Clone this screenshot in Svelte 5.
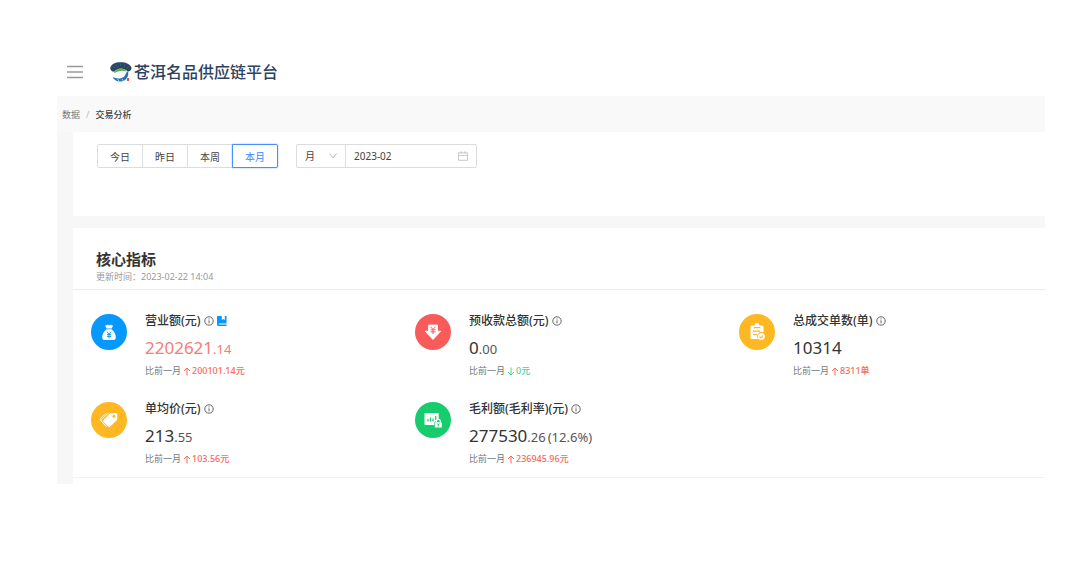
<script lang="ts">
  type Metric = {
    name: string;
    icon: string;
    color: string;
    value: string;
    decimals?: string;
    extra?: string;
    diff: string;
    down?: boolean;
    highlight?: boolean;
    report?: boolean;
  };

  const ranges = ['今日', '昨日', '本周', '本月'];
  let activeRange = $state('本月');
  let unit = $state('月');
  let month = $state('2023-02');

  const metrics: Metric[] = [
    { name: '营业额(元)', icon: 'bag', color: '#0598ff', value: '2202621', decimals: '.14', diff: '200101.14元', highlight: true, report: true },
    { name: '预收款总额(元)', icon: 'arrow', color: '#f95a5a', value: '0', decimals: '.00', diff: '0元', down: true },
    { name: '总成交单数(单)', icon: 'order', color: '#ffb822', value: '10314', diff: '8311单' },
    { name: '单均价(元)', icon: 'tag', color: '#ffb822', value: '213', decimals: '.55', diff: '103.56元' },
    { name: '毛利额(毛利率)(元)', icon: 'profit', color: '#16cc6c', value: '277530', decimals: '.26', extra: '(12.6%)', diff: '236945.96元' },
  ];
</script>

<div class="page">
  <header>
    <button class="menu" aria-label="菜单">
      <svg width="18" height="14" viewBox="0 0 18 14" stroke="#999" stroke-width="1.3">
        <path d="M1 1.5h16M1 7h16M1 12.5h16" />
      </svg>
    </button>
    <svg class="logo" width="22" height="20" viewBox="0 0 22 20">
      <path d="M0.2 6C1.2 2.2 5 0.2 10.6 0.2S20.2 2.2 21.6 5.8C21.2 8.600 19.700 9.600 17.600 9.400C15.800 7.200 13 6.500 10.300 6.800C7.400 7.100 5.600 8.100 4.300 9.800C1.800 9.800 0.500 8.600 0.200 6Z" fill="#294668" />
      <path d="M3 4.2l1.500 1.800M6 2.400l1 2.400M10.500 1.600v2.400M15 2.400l-1 2.400M18.600 4.400l-1.600 1.600" stroke="#60788f" stroke-width=".4" />
      <path d="M3.800 11.600C5 8 9 5.700 12.500 6.400C14.600 6.800 16 8 16.600 9.800C12.800 8 8.400 8.600 3.800 11.600Z" fill="#65af42" />
      <path d="M18 9.200C19.400 13.800 16 19.200 10.600 19.600C6.600 19.800 4 18 2.600 14.800C6.800 17.600 14.700 17.400 16 11Z" fill="#2774b5" />
      <path d="M7.500 16.800l1.400 2.400M12 16.800l1.200 2" stroke="#fff" stroke-width=".6" />
      <rect x="17" y="16" width="2" height="3" fill="#ee4c4c" />
    </svg>
    <h1>苍洱名品供应链平台</h1>
  </header>

  <main>
    <nav aria-label="breadcrumb">
      <a href="#data">数据</a>
      <span class="slash">/</span>
      <span class="current">交易分析</span>
    </nav>

    <section class="filters">
      <div class="ranges">
        {#each ranges as range}
          <button class:active={activeRange === range} onclick={() => (activeRange = range)}>{range}</button>
        {/each}
      </div>
      <div class="picker">
        <div class="unit">
          <select aria-label="周期" bind:value={unit}>
            <option>日</option>
            <option>周</option>
            <option>月</option>
          </select>
          <svg width="8" height="6" viewBox="0 0 8 6" fill="none" stroke="#bbb">
            <path d="M.5.5L4 5 7.5.5" />
          </svg>
        </div>
        <div class="date">
          <input type="text" aria-label="日期" bind:value={month} />
          <svg width="10" height="10" viewBox="0 0 10 10" fill="none" stroke="#c4c4c4" stroke-width=".9">
            <path d="M.5 1.8h9v7.5h-9zM.5 4.4h9M3 .2v2.6M7 .2v2.6" />
          </svg>
        </div>
      </div>
    </section>

    <section class="panel">
      <div class="panel-head">
        <h2>核心指标</h2>
        <p>更新时间：2023-02-22 14:04</p>
      </div>

      <div class="metrics">
        {#each metrics as metric}
          <article>
            <svg class="badge" width="36" height="36" viewBox="0 0 36 36">
              <circle cx="18" cy="18" r="18" fill={metric.color} />
              {#if metric.icon === 'bag'}
                <path d="M14 11.5c1.2 0 1.5-.8 2.5-.8.8 0 1 .6 1.7.6s1-.6 1.8-.6c.9 0 1.1.8 2.2.8l-1.5 3h-5.2z" fill="#fff" />
                <path d="M15.4 15.2h5.2c2.6 2 4.2 5 4.2 8 0 2-1 2.9-3 2.9h-7.6c-2 0-3-.9-3-2.9 0-3 1.6-6 4.2-8z" fill="#fff" />
                <path d="M16 17.8l2 2.5 2-2.5M18 20.3v4M16 20.6h4M16 22.4h4" stroke={metric.color} fill="none" />
              {:else if metric.icon === 'arrow'}
                <path d="M13.5 11h9v6.2h3.3L18 25.6l-7.8-8.4h3.3z" fill="#fff" stroke="#fff" stroke-linejoin="round" stroke-width=".8" />
                <path d="M15.7 13l2.3 2.4 2.3-2.4M18 15.4V20M15.5 15.8h5M15.5 17.8h5" stroke={metric.color} fill="none" />
              {:else if metric.icon === 'order'}
                <path d="M13 11.5h2.6c.2-1.6 1.1-2.4 2.4-2.4s2.2.8 2.4 2.4H23c1 0 1.5.5 1.5 1.5v5.4a4.3 4.3 0 0 0-5.3 6.6H13c-1 0-1.5-.5-1.5-1.5V13c0-1 .5-1.5 1.5-1.5z" fill="#fff" />
                <path d="M14.8 13.7h6.4M14 17.2h7M14 20.5h4" stroke={metric.color} stroke-width="1.2" />
                <circle cx="22.3" cy="22.6" r="3.5" fill="#fff" />
                <path d="M20.5 22.5l1.4 1.5 2.4-2.7" fill="none" stroke={metric.color} stroke-width="1.1" />
              {:else if metric.icon === 'tag'}
                <path d="M19 11.2l5.5-.2c1.100 0 1.700.6 1.700 1.700v5.100l-6.800 6.700c-.8.800-1.600.8-2.400 0l-4.200-4.300c-.8-.8-.8-1.600 0-2.400z" fill="#fff" />
                <path d="M17.2 11.2l-6.4 6c-.8.8-.8 1.5 0 2.3l4.8 5.3M15.2 11.2l-5.4 5c-.8.8-.8 1.5 0 2.3l4 4.6" fill="none" stroke="#fff" stroke-width=".8" />
                <circle cx="23" cy="14.3" r="1.5" fill={metric.color} />
              {:else}
                <path d="M10.5 11h13.2v7.1a4 4 0 0 0-4.5 4.9h-8.7c-.7 0-1-.3-1-1V12c0-.7.3-1 1-1z" fill="#fff" />
                <path d="M13 17v2.5M15.500 15.500v4M18 16.500v3M20.700 14v4" stroke={metric.color} stroke-width="1.2" />
                <path d="M21.3 20.500v-1.100a2 2 0 0 1 4 0v1.100" fill="none" stroke="#fff" stroke-width="1.2" />
                <rect x="19.800" y="20.300" width="7" height="5.300" rx=".6" fill="#fff" />
                <path d="M22 21.5l1.3 1.300 1.300-1.300M23.300 22.500v2" stroke={metric.color} fill="none" stroke-width=".9" />
              {/if}
            </svg>
            <div class="info">
              <h3>
                {metric.name}
                <svg width="10" height="10" viewBox="0 0 10 10" fill="none" stroke="#555" stroke-width=".9">
                  <circle cx="5" cy="5" r="4.2" />
                  <path d="M5 4.300v3M5 2.500v1" />
                </svg>
                {#if metric.report}
                  <svg width="10" height="10" viewBox="0 0 10 10">
                    <path d="M1 0h8.500v7.500H1.800v1H9.500V10H1.500C.6 10 0 9.500 0 8.500V1c0-.7.3-1 1-1z" fill="#0598ff" />
                    <path d="M4.800 0h3v4L6.300 3 4.800 4z" fill="#fff" />
                  </svg>
                {/if}
              </h3>
              <p class="value" class:highlight={metric.highlight}>
                {metric.value}<small>{metric.decimals}</small><small class="extra">{metric.extra}</small>
              </p>
              <p class="compare">
                比前一月
                <span class:down={metric.down}>
                  <svg width="8" height="9" viewBox="0 0 8 9" fill="none" stroke="currentColor">
                    {#if metric.down}
                      <path d="M4 .5V8M1 5l3 3 3-3" />
                    {:else}
                      <path d="M4 8.500V1M1 4l3-3 3 3" />
                    {/if}
                  </svg>{metric.diff}
                </span>
              </p>
            </div>
          </article>
        {/each}
      </div>
    </section>
  </main>
</div>

<style>
  :global(body) {
    margin: 0;
    background: #fff;
  }

  .page {
    padding: 47px 35px 0 57px;
    font-family: 'Noto Sans', 'Noto Sans CJK SC', sans-serif;
    font-size: 10px;
    color: #444;
  }

  h1, h2, h3, p {
    margin: 0;
  }

  button, input, select {
    font: inherit;
    color: inherit;
  }

  header {
    display: flex;
    align-items: center;
    height: 49px;
    padding-left: 9px;
  }

  .menu {
    display: flex;
    padding: 0;
    border: 0;
    background: none;
    cursor: pointer;
  }

  .logo {
    margin: 0 2px 0 26px;
  }

  h1 {
    font-size: 16px;
    line-height: 24px;
    font-weight: 500;
    color: #2b4262;
  }

  main {
    padding-left: 16px;
    background: #f7f7f7;
  }

  nav {
    display: flex;
    align-items: center;
    gap: 6px;
    height: 36px;
    margin-left: -16px;
    padding-left: 5px;
    background: #f9f9f9;
    font-size: 9px;
  }

  nav a {
    color: #777;
    text-decoration: none;
  }

  .slash {
    color: #bbb;
  }

  .current {
    color: #444;
    font-weight: 500;
  }

  .filters {
    display: flex;
    align-items: flex-start;
    gap: 18px;
    padding: 12px 24px 48px;
    background: #fff;
  }

  .ranges {
    display: flex;
  }

  .ranges button {
    width: 46px;
    height: 24px;
    padding: 0;
    border: 1px solid #dcdcdc;
    background: #fff;
    cursor: pointer;
  }

  .ranges button + button {
    margin-left: -1px;
  }

  .ranges button:first-child {
    border-radius: 2px 0 0 2px;
  }

  .ranges button:last-child {
    border-radius: 0 2px 2px 0;
  }

  .ranges button.active {
    position: relative;
    border-color: #478ffc;
    color: #3385ff;
    box-shadow: 0 0 2px #8fbcff;
  }

  .picker {
    display: flex;
    box-sizing: border-box;
    height: 24px;
    border: 1px solid #dcdcdc;
    border-radius: 2px;
  }

  .unit, .date {
    display: flex;
    align-items: center;
    position: relative;
  }

  .unit {
    width: 48px;
    border-right: 1px solid #dcdcdc;
  }

  select, input {
    box-sizing: border-box;
    width: 100%;
    height: 22px;
    padding: 0 8px;
    border: 0;
    background: none;
    appearance: none;
    outline: none;
  }

  .date {
    width: 130px;
  }

  .unit svg, .date svg {
    position: absolute;
    right: 8px;
    pointer-events: none;
  }

  .panel {
    margin-top: 12px;
    padding-bottom: 6px;
    background: #fff;
  }

  .panel-head {
    padding: 20px 23px 5px;
    border-bottom: 1px solid #ececec;
  }

  h2 {
    font-size: 15px;
    line-height: 22px;
    color: #333;
  }

  .panel-head p {
    font-size: 9px;
    line-height: 14px;
    color: #999;
  }

  .metrics {
    display: grid;
    grid-template-columns: repeat(3, 1fr);
    row-gap: 20px;
    padding: 21px 0 10px;
    border-bottom: 1px solid #f3f3f3;
  }

  article {
    display: flex;
    gap: 18px;
    padding-left: 18px;
  }

  .badge {
    flex: none;
    margin-top: 3px;
  }

  h3 {
    display: flex;
    align-items: center;
    gap: 3px;
    font-size: 12px;
    line-height: 20px;
    font-weight: 500;
    color: #333;
  }

  .value {
    margin: 5px 0 3px;
    font-size: 17px;
    line-height: 24px;
    color: #333;
  }

  .value small {
    font-size: 13px;
    line-height: 1;
    color: #555;
  }

  .value .extra {
    margin-left: 2px;
  }

  .value.highlight, .value.highlight small {
    color: #f97b74;
  }

  .compare {
    display: flex;
    align-items: center;
    gap: 2px;
    font-size: 9px;
    line-height: 16px;
    color: #777;
  }

  .compare span {
    display: flex;
    align-items: center;
    gap: 1px;
    color: #f8685c;
    font-weight: 500;
  }

  .compare .down {
    color: #52ce8d;
  }
</style>
